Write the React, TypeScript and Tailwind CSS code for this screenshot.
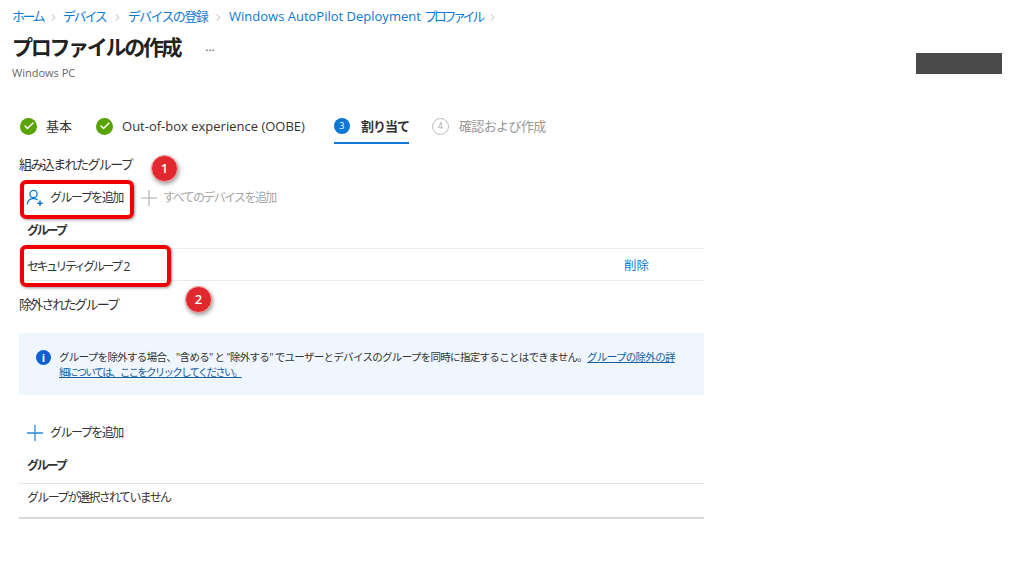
import { Check, Plus, ChevronRight } from 'lucide-react'

const FONT = 'font-["Open_Sans","Noto_Sans_CJK_JP",sans-serif]'

function Sep({ className }: { className: string }) {
  return <ChevronRight size={11} strokeWidth={1.2} className={`text-[#777] ${className}`} />
}

function DoneStep({ label, className }: { label: string; className?: string }) {
  return (
    <div className="flex items-center gap-[9px]">
      <span className="w-[17px] h-[17px] rounded-full bg-[#57a300] flex items-center justify-center">
        <Check size={12} strokeWidth={3} className="text-white" />
      </span>
      <span className={`text-[13px] text-[#333] ${className ?? ''}`}>{label}</span>
    </div>
  )
}

function AddUserIcon() {
  return (
    <svg width="18" height="18" viewBox="0 0 18 18" fill="none" stroke="#0f78d4" strokeWidth="1.3">
      <circle cx="7.5" cy="5" r="3.6" />
      <path d="M1.2 15.5c.4-3.6 3-6 6.3-6 1.6 0 3 .5 4 1.5" />
      <path d="M14 11.5v5.5M11.2 14.2h5.6" strokeWidth="1.6" />
    </svg>
  )
}

// numbered red marker from the annotated screenshot
function Badge({ n, className }: { n: number; className: string }) {
  return (
    <span
      className={`absolute w-[27px] h-[27px] rounded-full bg-[#e0282e] text-white text-[13px] font-semibold flex items-center justify-center border border-[#f6a6a6] shadow-[1px_2px_4px_rgba(0,0,0,0.4)] ${className}`}
    >
      {n}
    </span>
  )
}

export default function App() {
  return (
    <div className={`relative w-[1024px] h-[576px] overflow-hidden bg-white text-[#333] ${FONT}`}>
      <div className="pl-[12px] pt-[8px]">
        <div className="flex items-center text-[13px] h-[18px] text-[#0f78d4] whitespace-nowrap">
          <span className="tracking-[-2.6px]">ホーム</span>
          <Sep className="ml-[5px] mr-[4px]" />
          <span className="tracking-[-2.2px]">デバイス</span>
          <Sep className="ml-[6px] mr-[5px]" />
          <span className="tracking-[-1.6px]">デバイスの登録</span>
          <Sep className="ml-[6px] mr-[5px]" />
          <span>Windows AutoPilot Deployment <span className="tracking-[-3.4px]">プロファイル</span></span>
          <Sep className="ml-[5px]" />
        </div>
        <div className="flex items-center mt-[7px] h-[30px]">
          <h1 className="text-[21px] font-semibold text-[#222] tracking-[-2.3px]">プロファイルの作成</h1>
          <span className="ml-[25px] text-[12px] text-[#555] -mt-[3px]">...</span>
        </div>
        <div className="text-[11px] text-[#666] mt-[2px]">Windows PC</div>
      </div>

      <div className="w-[704px] pl-[19px] mt-[30px]">
        {/* Wizard steps */}
        <div className="flex h-[32px] items-start">
          <div className="flex ml-[1px] gap-[24px] items-center pt-[5px]">
            <DoneStep label="基本" className="text-[13.5px]" />
            <DoneStep label="Out-of-box experience (OOBE)" />
          </div>
          <div className="ml-[29px] h-[32px] pt-[5px] border-b-2 border-[#0f78d4] flex items-start gap-[11px]">
            <span className="w-[16px] h-[16px] mt-[1px] rounded-full bg-[#0f78d4] text-white text-[9px] flex items-center justify-center">3</span>
            <span className="text-[13px] font-semibold text-[#333] tracking-[-1px]">割り当て</span>
          </div>
          <div className="ml-[23px] pt-[5px] flex items-start gap-[10px]">
            <span className="w-[17px] h-[17px] mt-[1px] rounded-full border border-[#bbb] text-[#aaa] text-[9px] flex items-center justify-center">4</span>
            <span className="text-[13px] text-[#999] tracking-[-0.6px]">確認および作成</span>
          </div>
        </div>

        {/* Included groups */}
        <div className="mt-[11px] text-[13px] leading-[18px] h-[18px] tracking-[-1.6px]">組み込まれたグループ</div>
        <div className="flex items-center h-[32px] mt-[9px] text-[12px]">
          <div className="flex items-center pl-[7px] w-[121px]">
            <AddUserIcon />
            <span className="ml-[6px] tracking-[-1.5px]">グループを追加</span>
          </div>
          <Plus size={26} strokeWidth={1} className="text-[#aaa] -ml-[4px]" />
          <span className="ml-[1px] text-[#a6a6a6] tracking-[-1.6px]">すべてのデバイスを追加</span>
        </div>
        <div className="h-[35px] pl-[8px] flex items-center text-[12px] font-semibold border-b border-[#eaeaea] tracking-[-2.2px]">グループ</div>
        <div className="h-[32px] pl-[8px] pt-[5px] flex items-center justify-between text-[12px] border-b border-[#eaeaea]">
          <span className="flex items-center">
            <span className="tracking-[-2.5px]">セキュリティグループ</span>
            <span className="ml-[3px]">2</span>
          </span>
          <span className="mr-[55px] text-[12.5px] text-[#0f78d4]">削除</span>
        </div>

        {/* Excluded groups */}
        <div className="mt-[14px] text-[13px] leading-[18px] tracking-[-1.9px]">除外されたグループ</div>
        <div className="mt-[20px] h-[62px] bg-[#eff6fe] flex pl-[17px] pt-[17px] text-[10.5px] leading-[15px]">
          <span className="w-[15px] h-[15px] shrink-0 rounded-full bg-[#0f5fd4] text-white text-[11px] font-bold flex items-center justify-center">i</span>
          <p className="ml-[8px] text-[#333] whitespace-nowrap tracking-[-0.69px]">
            グループを除外する場合、"含める" と "除外する" でユーザーとデバイスのグループを同時に指定することはできません。
            <span className="text-[#17609f] underline">グループの除外の詳</span>
            <br />
            <span className="text-[#17609f] underline tracking-[-1.75px]">細については、ここをクリックしてください。</span>
          </p>
        </div>
        <div className="flex items-center h-[32px] mt-[22px] pl-[3px] text-[12px]">
          <Plus size={26} strokeWidth={1.2} className="text-[#2b88d8]" />
          <span className="ml-[2px] tracking-[-1.5px]">グループを追加</span>
        </div>
        <div className="h-[35px] pl-[8px] flex items-center text-[12px] font-semibold border-b border-[#e5e5e5] tracking-[-2.2px]">グループ</div>
        <div className="h-[35px] pl-[8px] pb-[4px] flex items-center text-[12px] border-b-2 border-[#d9d9d9] tracking-[-1.65px]">グループが選択されていません</div>
      </div>

      {/* Redaction bar */}
      <div className="absolute left-[916px] top-[53px] w-[86px] h-[21px] bg-[#4a4a4a]" />

      {/* Annotations */}
      <div className="absolute left-[20px] top-[180px] w-[114px] h-[39px] rounded-[6px] border-[4px] border-[#f00000] shadow-[1px_1px_3px_rgba(0,0,0,0.4)]" />
      <div className="absolute left-[20px] top-[245px] w-[151px] h-[42px] rounded-[6px] border-[4px] border-[#f00000] shadow-[1px_1px_3px_rgba(0,0,0,0.4)]" />
      <Badge n={1} className="left-[151px] top-[155px]" />
      <Badge n={2} className="left-[185px] top-[286px]" />
    </div>
  )
}
